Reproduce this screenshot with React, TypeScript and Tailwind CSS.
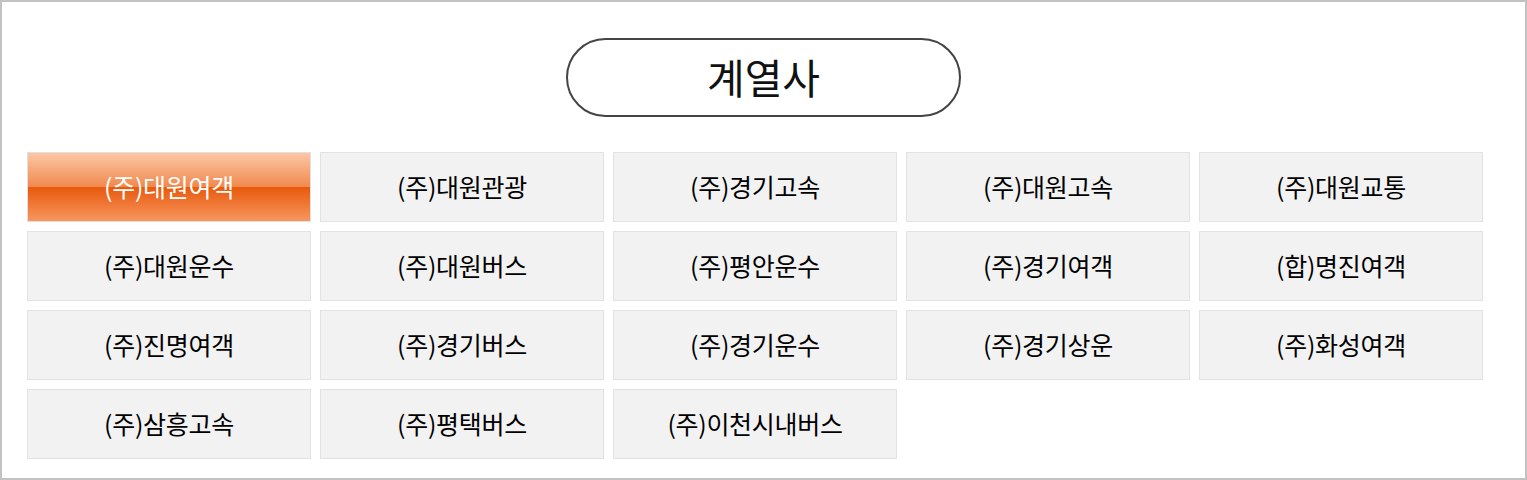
const COMPANIES = [
  '(주)대원여객', '(주)대원관광', '(주)경기고속', '(주)대원고속', '(주)대원교통',
  '(주)대원운수', '(주)대원버스', '(주)평안운수', '(주)경기여객', '(합)명진여객',
  '(주)진명여객', '(주)경기버스', '(주)경기운수', '(주)경기상운', '(주)화성여객',
  '(주)삼흥고속', '(주)평택버스', '(주)이천시내버스',
];

export default function App() {
  const active = 0;

  return (
    <div className="w-[1527px] h-[480px] border-2 border-[#c2c2c2] bg-white font-['Malgun_Gothic','Noto_Sans_CJK_KR',sans-serif] text-black">
      <div className="flex justify-center pt-[36px]">
        <div className="w-[395px] h-[79px] rounded-full border-2 border-[#444] flex items-center justify-center text-[41px] leading-none text-[#111] pb-[2px]">
          계열사
        </div>
      </div>

      <div className="grid grid-cols-5 gap-[9px] w-[1456px] ml-[25px] mt-[35px]">
        {COMPANIES.map((name, i) => (
          <div
            key={name}
            className={
              i === active
                ? 'h-[70px] flex items-center justify-center border border-[#e0e0e0] text-[25px] tracking-[-0.3px] text-white bg-[linear-gradient(to_bottom,#fcc7a6_0%,#f0894d_50%,#e8590c_50%,#f7965e_100%)]'
                : 'h-[70px] flex items-center justify-center border border-[#e2e2e2] bg-[#f2f2f2] text-[25px] tracking-[-0.3px]'
            }
          >
            {name}
          </div>
        ))}
      </div>
    </div>
  );
}
